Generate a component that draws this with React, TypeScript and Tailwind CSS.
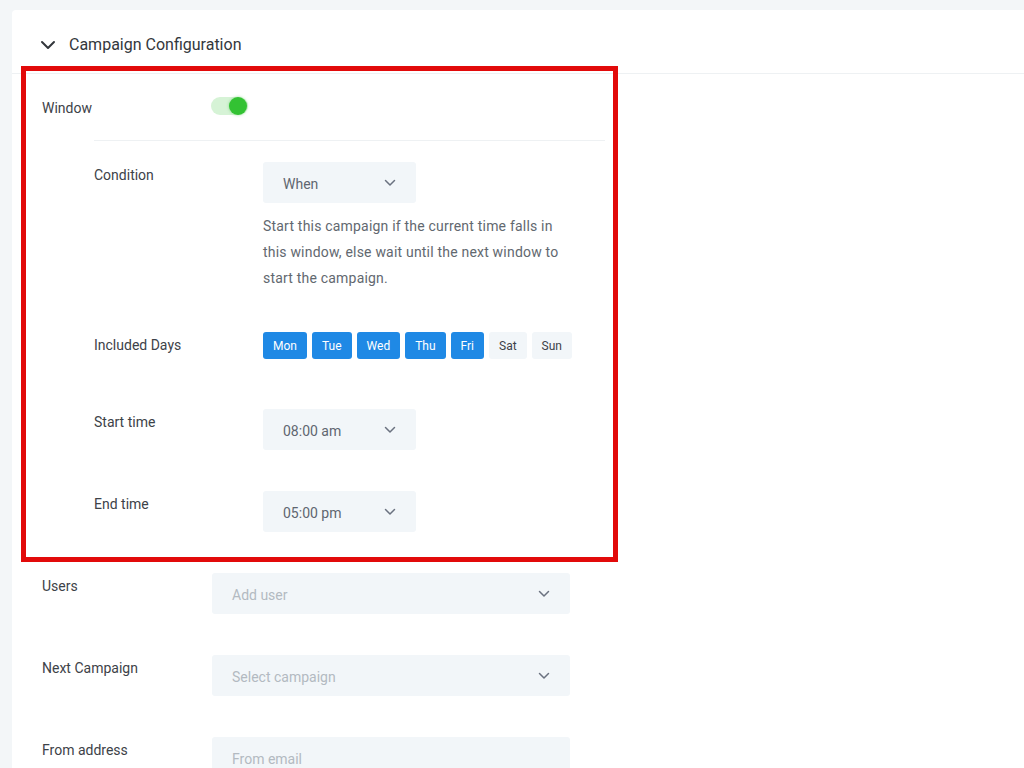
import React from "react";

const Chevron = ({ className = "" }: { className?: string }) => (
  <svg className={className} width="12" height="8" viewBox="0 0 12 8" fill="none">
    <path d="M1.5 1.5L6 6L10.5 1.5" stroke="currentColor" strokeWidth="1.5" strokeLinecap="round" strokeLinejoin="round" />
  </svg>
);

const Select = ({ value, wide, placeholder }: { value: string; wide?: boolean; placeholder?: boolean }) => (
  <div
    className={`flex h-[41px] items-center justify-between rounded-[3px] bg-[#f2f6f9] pl-[20px] pr-[20px] ${
      wide ? "w-[358px]" : "w-[153px]"
    }`}
  >
    <span className={`pt-[3px] text-[14px] ${placeholder ? "text-[#b3bac1]" : "text-[#5f6670]"}`}>{value}</span>
    <Chevron className="text-[#6b7280]" />
  </div>
);

const Label = ({ children, w }: { children: React.ReactNode; w: string }) => (
  <div className={`${w} shrink-0 pt-[2px] text-[14px] leading-[22px] text-[#3d4248]`}>{children}</div>
);

const days = [
  { d: "Mon", on: true },
  { d: "Tue", on: true },
  { d: "Wed", on: true },
  { d: "Thu", on: true },
  { d: "Fri", on: true },
  { d: "Sat", on: false },
  { d: "Sun", on: false },
];

export default function App() {
  return (
    <div
      className="relative min-h-[768px] w-[1024px] overflow-hidden bg-[#f3f6f8] pl-[12px] pt-[10px]"
      style={{ fontFamily: "Roboto, 'Noto Sans', Arial, sans-serif" }}
    >
      <div className="min-h-[758px] w-[1100px] rounded-tl-[4px] bg-white">
        {/* header */}
        <div className="flex h-[64px] items-center border-b border-[#eef1f3] pl-[28px] pt-[6px]">
          <svg width="16" height="10" viewBox="0 0 16 10" fill="none" className="text-[#33373c]">
            <path d="M2 2L8 8L14 2" stroke="currentColor" strokeWidth="2" strokeLinecap="round" strokeLinejoin="round" />
          </svg>
          <span className="ml-[13px] text-[16px] text-[#33373c]">Campaign Configuration</span>
        </div>

        {/* body */}
        <div className="pl-[30px] pt-[23px]">
          {/* Window row */}
          <div className="flex items-start">
            <div className="w-[169px] shrink-0 pt-[1px] text-[14px] leading-[20px] text-[#3d4248]">Window</div>
            <div className="relative h-[18px] w-[37px] rounded-full bg-[#d6f3d6]">
              <div className="absolute right-[1px] top-[0px] h-[18px] w-[18px] rounded-full bg-[#33c233] shadow-[0_0_3px_rgba(51,194,51,0.5)]" />
            </div>
          </div>

          {/* nested section */}
          <div className="ml-[52px] mt-[22px] w-[511px] border-t border-[#eef1f3] pt-[21px]">
            <div className="flex items-start">
              <Label w="w-[169px]">Condition</Label>
              <div>
                <Select value="When" />
                <p className="mt-[10px] w-[305px] text-[14px] leading-[26px] tracking-[0.2px] text-[#62686f]">
                  Start this campaign if the current time falls in this window, else wait until the next window to
                  start the campaign.
                </p>
              </div>
            </div>

            <div className="mt-[41px] flex items-start">
              <Label w="w-[169px]">Included Days</Label>
              <div className="flex gap-[5px]">
                {days.map((x) => (
                  <div
                    key={x.d}
                    className={`flex h-[27px] items-center rounded-[3px] px-[10px] pt-[1px] text-[12px] ${
                      x.on ? "bg-[#1f89e5] text-white" : "bg-[#f2f6f9] text-[#3d4248]"
                    }`}
                  >
                    {x.d}
                  </div>
                ))}
              </div>
            </div>

            <div className="mt-[50px] flex items-start">
              <Label w="w-[169px]">Start time</Label>
              <Select value="08:00 am" />
            </div>

            <div className="mt-[41px] flex items-start">
              <Label w="w-[169px]">End time</Label>
              <Select value="05:00 pm" />
            </div>
          </div>

          <div className="mt-[41px] flex items-start">
            <Label w="w-[170px]">Users</Label>
            <Select value="Add user" wide placeholder />
          </div>

          <div className="mt-[41px] flex items-start">
            <Label w="w-[170px]">Next Campaign</Label>
            <Select value="Select campaign" wide placeholder />
          </div>

          <div className="mt-[41px] flex items-start">
            <Label w="w-[170px]">From address</Label>
            <div className="flex h-[41px] w-[358px] items-center rounded-[3px] bg-[#f2f6f9] pl-[20px]">
              <span className="pt-[3px] text-[14px] text-[#b3bac1]">From email</span>
            </div>
          </div>
        </div>
      </div>

      {/* annotation overlay */}
      <div className="pointer-events-none absolute left-[21px] top-[66px] h-[496px] w-[597px] border-[5px] border-[#e20a0a]" />
    </div>
  );
}
